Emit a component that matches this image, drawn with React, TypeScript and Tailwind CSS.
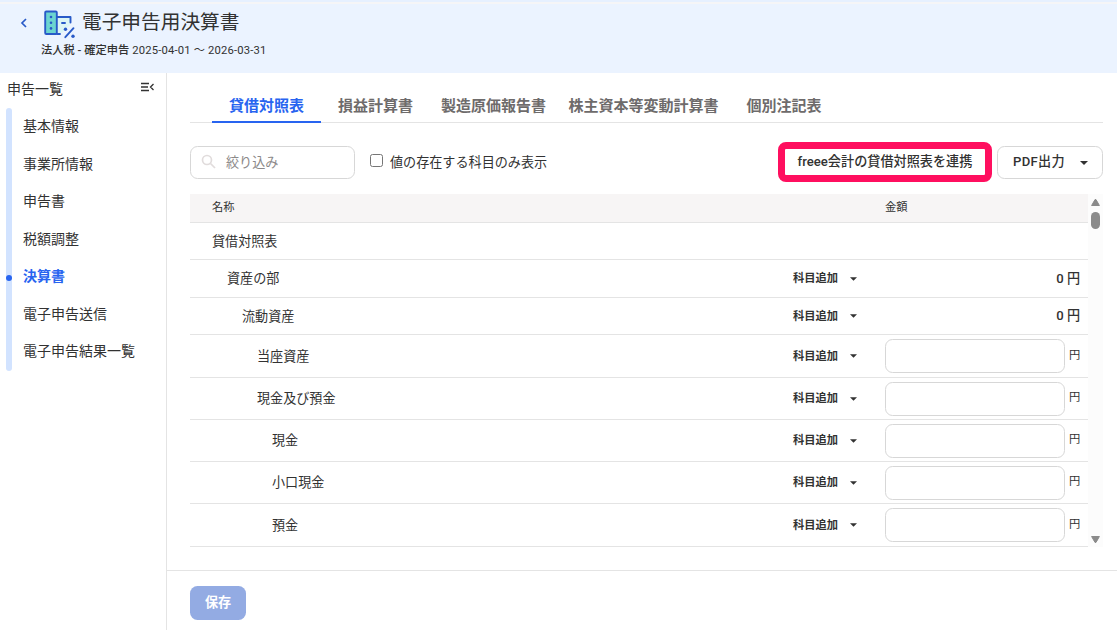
import React from "react";

const navItems = ["基本情報", "事業所情報", "申告書", "税額調整", "決算書", "電子申告送信", "電子申告結果一覧"];

const tabs = [
  { label: "貸借対照表", width: "w-[109px]", active: true },
  { label: "損益計算書", width: "w-[109px]" },
  { label: "製造原価報告書", width: "w-[127px]" },
  { label: "株主資本等変動計算書", width: "w-[173px]" },
  { label: "個別注記表", width: "w-[108px]" },
];

type Row = { name: string; indent: string; height: string; kind: "none" | "total" | "input" };

const rows: Row[] = [
  { name: "貸借対照表", indent: "pl-[22px]", height: "h-[37px]", kind: "none" },
  { name: "資産の部", indent: "pl-[37px]", height: "h-[38px]", kind: "total" },
  { name: "流動資産", indent: "pl-[52px]", height: "h-[37px]", kind: "total" },
  { name: "当座資産", indent: "pl-[67px]", height: "h-[43px]", kind: "input" },
  { name: "現金及び預金", indent: "pl-[67px]", height: "h-[42px]", kind: "input" },
  { name: "現金", indent: "pl-[82px]", height: "h-[42px]", kind: "input" },
  { name: "小口現金", indent: "pl-[82px]", height: "h-[42px]", kind: "input" },
  { name: "預金", indent: "pl-[82px]", height: "h-[43px]", kind: "input" },
];

function Caret({ className }: { className: string }) {
  return (
    <svg viewBox="0 0 8 4" className={className} fill="#323232">
      <path d="M0 0h8L4 4z" />
    </svg>
  );
}

function ReportIcon() {
  return (
    <svg width="33" height="30" viewBox="0 0 33 30" fill="none" stroke="#285ac8" strokeWidth="1.900" strokeLinecap="round" strokeLinejoin="round">
      <path d="M14 8h13v8l-8 8h-5z" fill="#dcf5f5" stroke="none" />
      <rect x="2.200" y="2.500" width="11.600" height="22.500" rx="1" fill="#6cd5d0" />
      <path d="M14 8h13.500v5.500" />
      <path d="M19 14h3" />
      <path d="M14 25h3" />
      <path d="M22.300 28.200l8.200-9" />
      <g fill="#285ac8" stroke="none">
        <circle cx="8" cy="8" r="1.300" />
        <circle cx="8" cy="13.700" r="1.300" />
        <circle cx="8" cy="19.400" r="1.300" />
        <circle cx="22.500" cy="20.300" r="1.700" />
        <circle cx="30" cy="27.300" r="1.700" />
      </g>
    </svg>
  );
}

function TableRow({ row }: { row: Row }) {
  return (
    <div className={`flex items-center border-b border-[#e4e4e4] ${row.height}`}>
      <div className={`w-[603px] pt-px text-[13.1px] ${row.indent}`}>{row.name}</div>
      <div className="flex w-[92px] items-center">
        {row.kind !== "none" && (
          <button className="flex items-center text-[11.25px] font-bold">
            <span className="pt-[2px]">科目追加</span>
            <Caret className="ml-3 h-[4px] w-[7px]" />
          </button>
        )}
      </div>
      {row.kind === "total" && <div className="flex-1 pr-[8px] text-right text-[13.1px] font-medium">0 円</div>}
      {row.kind === "input" && (
        <div className="flex items-center gap-1">
          <input aria-label={row.name} className="h-[34px] w-[180px] rounded-[7.500px] border border-[#d7d7d7] bg-white" />
          <span className="text-[11.25px]">円</span>
        </div>
      )}
    </div>
  );
}

export default function App() {
  return (
    <div className="flex h-[630px] w-[1117px] flex-col overflow-hidden bg-white font-[Roboto,'Noto_Sans_CJK_JP',sans-serif] leading-normal text-[#323232]">
      <header className="h-[73px] shrink-0 border-t-2 border-[#e6f0ff] bg-[#ebf3ff]">
        <div className="flex h-[41px] items-center border-t-2 border-[#f5f5f7] pl-[20px]">
          <svg width="8" height="10" viewBox="0 0 8 10" fill="none" stroke="#285ac8" strokeWidth="1.700" className="mb-[2px]">
            <path d="M6 1L2 5l4 4" />
          </svg>
          <div className="ml-[15px]">
            <ReportIcon />
          </div>
          <h1 className="ml-[6px] mb-[2px] text-[19.7px]">電子申告用決算書</h1>
        </div>
        <p className="flex pl-[41px] text-[11.25px] leading-[16px]">
          <b className="mr-[3px] font-medium">法人税 - 確定申告</b>
          <span className="tracking-[0.17px]">2025-04-01 ～ 2026-03-31</span>
        </p>
      </header>

      <div className="flex min-h-0 flex-1">
        <aside className="w-[167px] shrink-0 border-r border-[#e4e4e4]">
          <div className="flex h-[31px] items-center justify-between pl-[7px] pr-[12px] text-[14px]">
            <span className="pt-px">申告一覧</span>
            <svg width="13" height="10" viewBox="0 0 13 10" fill="none" stroke="#323232" strokeWidth="1.300" className="mb-[3px]">
              <path d="M0 1.500h8M0 5h7M0 8.500h8M12.500 2L9.500 5l3 3" />
            </svg>
          </div>
          <div className="mt-1 flex pl-[6px]">
            <div className="relative h-[263px] w-[6px] rounded-full bg-[#d2e3ff]">
              <span className="absolute left-0 top-[167px] size-[6px] rounded-full bg-[#2864f0]" />
            </div>
            <nav className="ml-[11px]">
              {navItems.map((item) => (
                <div
                  key={item}
                  className={`flex h-[37.5px] items-center text-[14px] ${item === "決算書" ? "font-bold text-[#2864f0]" : ""}`}
                >
                  {item}
                </div>
              ))}
            </nav>
          </div>
        </aside>

        <div className="flex min-w-0 flex-1 flex-col">
          <main className="h-[498px] shrink-0 border-b border-[#e4e4e4] pl-[23px] pr-[14px] pt-[16px]">
            <div className="flex h-[34px] border-b border-[#e4e4e4] pl-[22px] text-[15px] font-bold text-[#6e6b6b]">
              {tabs.map((tab) => (
                <button
                  key={tab.label}
                  className={`flex h-[34px] shrink-0 items-center justify-center whitespace-nowrap pt-[2px] ${tab.width} ${
                    tab.active ? "border-b-2 border-[#2864f0] text-[#2864f0]" : "border-b-2 border-transparent"
                  }`}
                >
                  {tab.label}
                </button>
              ))}
            </div>

            <div className="mt-[19px] flex h-[40px] items-center">
              <div className="flex h-[33px] w-[165px] items-center rounded-[7.500px] border border-[#d7d7d7] pl-[10px] text-[13.1px] text-[#8c8989]">
                <svg width="16" height="16" viewBox="0 0 16 16" fill="none" stroke="#e1dcdc" strokeWidth="1.700">
                  <circle cx="6" cy="6" r="4.500" />
                  <path d="M9.500 9.500l4.500 4.500" />
                </svg>
                <span className="ml-[9px] pt-px">絞り込み</span>
              </div>
              <label className="ml-[15px] flex items-center text-[13.1px]">
                <span className="mb-[3px] mr-[7px] size-[13px] rounded-[2.500px] border border-[#767676] bg-white" />
                <span className="pt-px">値の存在する科目のみ表示</span>
              </label>
              <button className="ml-auto flex h-[40px] w-[214px] items-center justify-center rounded-[8px] border-[7px] border-[#ff0f5f] text-[13.15px] font-medium">
                freee会計の貸借対照表を連携
              </button>
              <button className="ml-[5px] flex h-[33px] w-[106px] items-center rounded-[7.500px] border border-[#d7d7d7] pl-[15px] text-[13.1px] font-medium">
                <span className="tracking-[0.3px]">PDF出力</span>
                <Caret className="ml-[15px] mt-[2px] h-[4px] w-[8px]" />
              </button>
            </div>

            <div className="mt-[12px] flex h-[353px]">
              <div className="w-[898px]">
                <div className="flex h-[29px] items-center border-b border-[#e4e4e4] bg-[#f7f5f5] text-[11.25px]">
                  <div className="w-[695px] pl-[22px]">名称</div>
                  <div>金額</div>
                </div>
                {rows.map((row) => (
                  <TableRow key={row.name} row={row} />
                ))}
              </div>
              <div className="flex w-[15px] flex-col items-center bg-[#fcfcfc] pt-[5px]">
                <svg width="9" height="7" viewBox="0 0 9 7" fill="#8b8b8b" stroke="#8b8b8b" strokeLinejoin="round">
                  <path d="M4 .6h1L8.400 6.500H.6z" />
                </svg>
                <div className="mt-[6px] h-[17px] w-[9px] rounded-full bg-[#8b8b8b]" />
                <svg className="mb-[4px] mt-auto" width="9" height="7" viewBox="0 0 9 7" fill="#8b8b8b" stroke="#8b8b8b" strokeLinejoin="round">
                  <path d="M4 6.400h1L8.400 .5H.6z" />
                </svg>
              </div>
            </div>
          </main>
          <footer className="pl-[23px] pt-[15px]">
            <button className="flex h-[34px] w-[56px] items-center justify-center rounded-[7.500px] bg-[#93abe3] text-[13.1px] font-bold text-white">
              保存
            </button>
          </footer>
        </div>
      </div>
    </div>
  );
}
